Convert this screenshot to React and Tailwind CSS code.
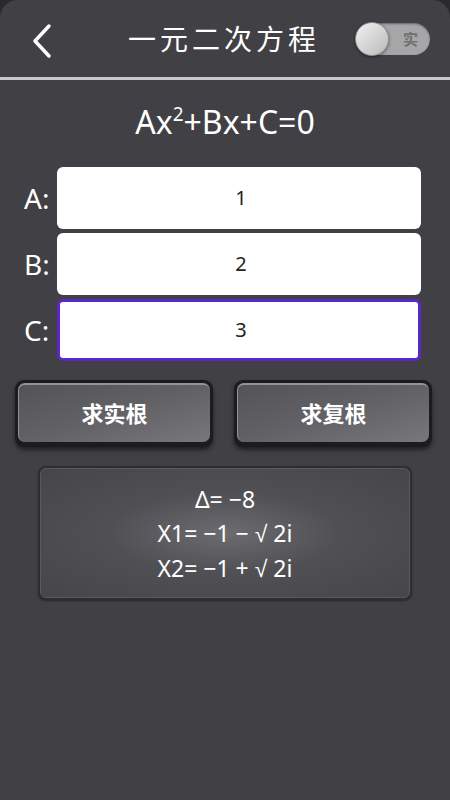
import React, { useState } from 'react';

const font = { fontFamily: '"Noto Sans", "Noto Sans CJK SC", sans-serif' };

const Sqrt = () => <span style={{ fontFamily: '"Liberation Sans", sans-serif' }}>√</span>;

const CoefRow = ({ label, value, active }) => (
    <div className="flex items-center h-[62px] mb-[4px]">
        <div className="w-[57px] pl-[24px] text-white text-[28px] leading-none">{label}</div>
        <div
            className={`flex-1 mr-[29px] h-full bg-white rounded-[6px] flex items-center justify-center text-[20px] text-[#222] pl-[4px] ${active ? 'border-[3px] border-[#5a27c9]' : ''}`}
        >
            {value}
        </div>
    </div>
);

const MetalButton = ({ children }) => (
    <button className="w-[198px] h-[67px] rounded-[9px] bg-[#1c1c1e] p-[3px] pb-[5px] shadow-[0_3px_4px_rgba(0,0,0,0.5)]">
        <div className="w-full h-full rounded-[7px] border-t-[2px] border-l border-[#949498] bg-gradient-to-br from-[#545458] via-[#626266] to-[#78787c] flex items-center justify-center text-white text-[22px] font-bold">
            {children}
        </div>
    </button>
);

export default function App() {
    const [real, setReal] = useState(false);
    return (
        <div className="w-[450px] h-[800px] bg-[#2a2a2c] overflow-hidden" style={font}>
            <div className="w-full h-full bg-[#414045] rounded-t-[18px] flex flex-col">
                {/* header */}
                <div className="h-[77px] flex items-center px-[30px] relative">
                    <svg width="24" height="36" viewBox="0 0 24 36" className="mt-[4px]">
                        <path d="M19 3 L5 18 L19 33" fill="none" stroke="white" strokeWidth="3.5" strokeLinecap="round" strokeLinejoin="round" />
                    </svg>
                    <div className="flex-1 text-center text-white text-[28px] tracking-[4px] pl-[38px]">一元二次方程</div>
                    <button
                        onClick={() => setReal(!real)}
                        className="w-[74px] h-[32px] rounded-full bg-[#a6a6a8] relative shadow-[inset_0_1px_2px_rgba(0,0,0,0.4)] mr-[-10px]"
                    >
                        <span className="absolute left-[-1px] top-[-1px] w-[34px] h-[34px] rounded-full bg-gradient-to-br from-[#f2f2f2] to-[#b9b9b9] border border-[#8f8f8f] shadow-[0_1px_3px_rgba(0,0,0,0.5)]" />
                        <span className="absolute right-[12px] top-[5px] text-[15px] font-bold text-[#707070]" style={{ fontFamily: '"Noto Sans CJK SC", serif' }}>实</span>
                    </button>
                </div>
                <div className="h-[3px] bg-[#c9c9cb]" />

                {/* equation */}
                <div className="text-center text-white text-[32px] mt-[22px] mb-[20px] leading-[40px]">
                    Ax<span className="text-[19px] relative top-[-13px]">2</span>+Bx+C=0
                </div>

                <CoefRow label="A:" value="1" />
                <CoefRow label="B:" value="2" />
                <CoefRow label="C:" value="3" active />

                {/* buttons */}
                <div className="flex gap-[21px] pl-[15px] mt-[15px]">
                    <MetalButton>求实根</MetalButton>
                    <MetalButton>求复根</MetalButton>
                </div>

                {/* result */}
                <div className="mx-[38px] mt-[19px] h-[134px] rounded-[8px] bg-[#2e2e31] p-[2px] shadow-[0_1px_2px_rgba(0,0,0,0.4)]">
                    <div className="w-full h-full rounded-[6px] border border-[#5a5a5e] bg-[radial-gradient(ellipse_at_center,#6c6c70_0%,#505054_45%,#45454a_100%)] flex flex-col items-center justify-center text-white text-[23px] leading-[34px] pt-[2px]">
                        <div>Δ= −8</div>
                        <div>X1= −1 − <Sqrt /> 2i</div>
                        <div>X2= −1 + <Sqrt /> 2i</div>
                    </div>
                </div>
            </div>
        </div>
    );
}
